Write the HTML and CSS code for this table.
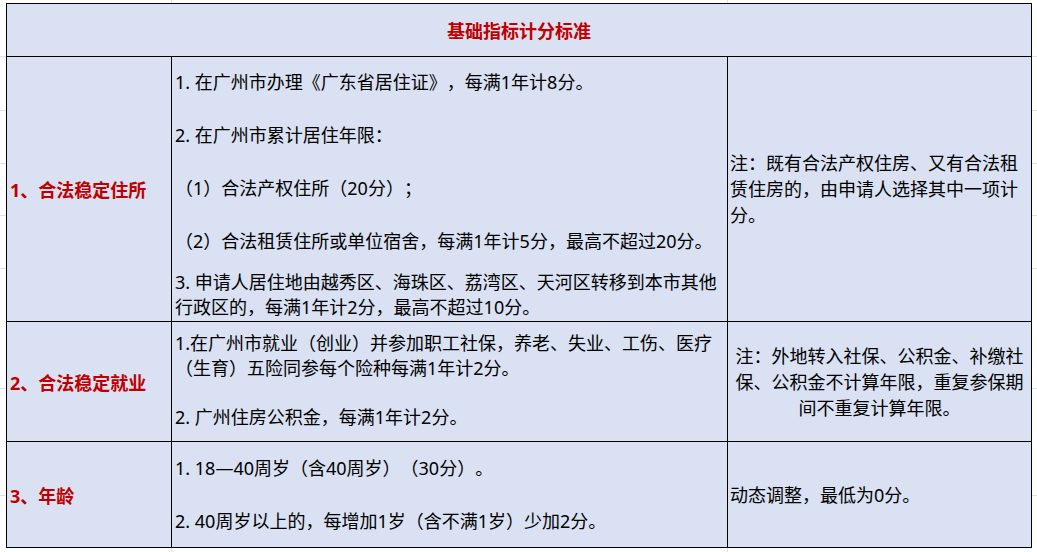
FILE: index.html
```html
<!DOCTYPE html>
<html lang="zh-CN">
<head>
<meta charset="utf-8">
<title>基础指标计分标准</title>
<link rel="stylesheet" href="styles.css">
</head>
<body>
<div class="sheet">
  <div class="cell head">基础指标计分标准</div>

  <div class="cell label">1、合法稳定住所</div>
  <div class="cell content r1">
    <p>1. 在广州市办理《广东省居住证》，每满1年计8分。</p>
    <p class="gap">2. 在广州市累计居住年限：</p>
    <p class="gap">（1）合法产权住所（20分）；</p>
    <p class="gap">（2）合法租赁住所或单位宿舍，每满1年计5分，最高不超过20分。</p>
    <p class="gap-s">3. 申请人居住地由越秀区、海珠区、荔湾区、天河区转移到本市其他<br>行政区的，每满1年计2分，最高不超过10分。</p>
  </div>
  <div class="cell note">注：既有合法产权住房、又有合法租<br>赁住房的，由申请人选择其中一项计<br>分。</div>

  <div class="cell label">2、合法稳定就业</div>
  <div class="cell content r2">
    <p>1.在广州市就业（创业）并参加职工社保，养老、失业、工伤、医疗<br>（生育）五险同参每个险种每满1年计2分。</p>
    <p class="gap-m">2. 广州住房公积金，每满1年计2分。</p>
  </div>
  <div class="cell note center">注：外地转入社保、公积金、补缴社<br>保、公积金不计算年限，重复参保期<br>间不重复计算年限。</div>

  <div class="cell label">3、年龄</div>
  <div class="cell content r3">
    <p>1. 18—40周岁（含40周岁）（30分）。</p>
    <p class="gap">2. 40周岁以上的，每增加1岁（含不满1岁）少加2分。</p>
  </div>
  <div class="cell note">动态调整，最低为0分。</div>
</div>
</body>
</html>
```

FILE: styles.css
```css
html, body {
  margin: 0;
  padding: 0;
}

body {
  width: 1037px;
  height: 552px;
  overflow: hidden;
  font-family: "Noto Sans", "Noto Sans CJK SC", sans-serif;
  font-size: 18px;
  color: #000;
  text-spacing-trim: space-all;
  background-color: #fff;
  background-image:
    linear-gradient(#dfe1e4, #dfe1e4),
    linear-gradient(#dfe1e4, #dfe1e4),
    linear-gradient(#dfe1e4, #dfe1e4),
    linear-gradient(#dfe1e4, #dfe1e4),
    linear-gradient(#dfe1e4, #dfe1e4),
    linear-gradient(#dfe1e4, #dfe1e4),
    linear-gradient(#dfe1e4, #dfe1e4),
    linear-gradient(#dfe1e4, #dfe1e4),
    linear-gradient(#dfe1e4, #dfe1e4);
  background-repeat: no-repeat;
  background-size:
    1px 100%, 1px 100%,
    100% 1px, 100% 1px, 100% 1px, 100% 1px, 100% 1px, 100% 1px, 100% 1px;
  background-position:
    171px 0, 727px 0,
    0 56px, 0 110px, 0 163px, 0 215px, 0 268px, 0 388px, 0 495px;
  padding: 3px 0 0 6px;
  box-sizing: border-box;
}

.sheet {
  display: grid;
  grid-template-columns: 164px 555px 303px;
  grid-template-rows: 52px 264px 119px 105px;
  gap: 1px;
  width: max-content;
  background: #000;
  border: 1px solid #000;
}

.cell {
  background: #d9e1f2;
  box-sizing: border-box;
  overflow: hidden;
}

.head {
  grid-column: 1 / -1;
  display: flex;
  align-items: center;
  justify-content: center;
  font-weight: 700;
  color: #c00000;
}

.label {
  display: flex;
  align-items: center;
  padding-left: 3px;
  font-weight: 700;
  color: #c00000;
  white-space: nowrap;
}

.content {
  padding-left: 3px;
  line-height: 25px;
  white-space: nowrap;
}

.content p {
  margin: 0;
}

.r1 { padding-top: 13px; }
.r2 { padding-top: 9px; }
.r3 { padding-top: 14px; }

.content .gap { margin-top: 28px; }
.content .gap-m { margin-top: 24px; }
.content .gap-s { margin-top: 16px; }

.note {
  display: flex;
  align-items: center;
  padding-left: 2px;
  line-height: 26px;
  white-space: nowrap;
}

.note.center {
  justify-content: center;
  text-align: center;
  padding-left: 0;
}
```
